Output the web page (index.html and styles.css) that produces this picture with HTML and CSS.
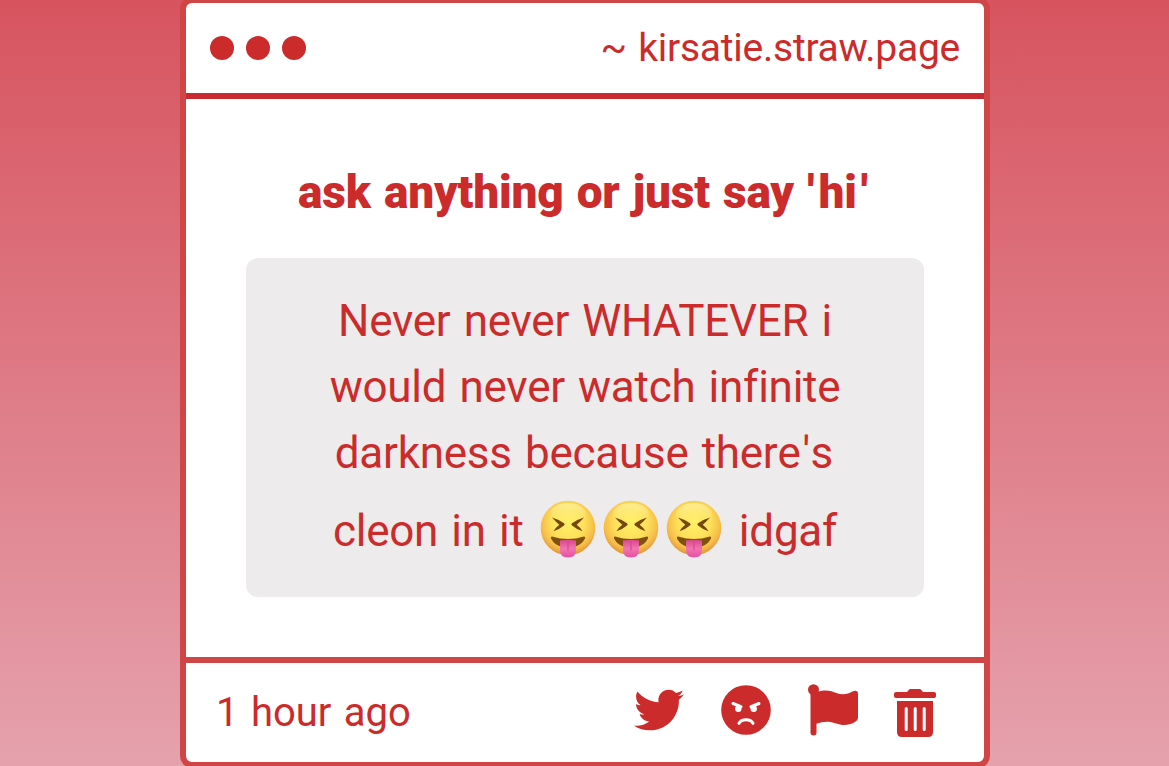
FILE: index.html
```html
<!DOCTYPE html>
<html lang="en">
<head>
  <meta charset="UTF-8" />
  <meta name="viewport" content="width=device-width, initial-scale=1.0" />
  <title>kirsatie.straw.page</title>
  <link rel="stylesheet" href="styles.css">
</head>
<body>
  <!-- Shared emoji drawing -->
  <svg class="defs" width="0" height="0" aria-hidden="true">
    <defs>
      <radialGradient id="face" cx="50%" cy="40%" r="61%">
        <stop offset="0" stop-color="#fff166" />
        <stop offset="0.5" stop-color="#fde05a" />
        <stop offset="0.8" stop-color="#f5bd48" />
        <stop offset="1" stop-color="#dd9235" />
      </radialGradient>
      <linearGradient id="shine" x1="0" y1="0" x2="0" y2="1">
        <stop offset="0" stop-color="#fffbd0" stop-opacity="0.5" />
        <stop offset="1" stop-color="#fff27a" stop-opacity="0" />
      </linearGradient>
      <linearGradient id="tongue" x1="0" y1="0" x2="0" y2="1">
        <stop offset="0" stop-color="#d9478c" />
        <stop offset="0.5" stop-color="#f274b2" />
        <stop offset="1" stop-color="#e54f9f" />
      </linearGradient>
      <symbol id="squint" viewBox="0 0 56 58">
        <circle cx="28" cy="28" r="27.3" fill="url(#face)" />
        <ellipse cx="28" cy="14" rx="18" ry="11" fill="url(#shine)" />
        <path d="M12 17.500Q19 19.500 24 23.300Q25.400 24.400 24 25.500Q19 29.700 13.500 31.300Q15.500 27.500 19.300 24.700Q16 22 12 17.500Z" fill="#75480f" />
        <path d="M44 17.500Q37 19.500 32 23.300Q30.600 24.400 32 25.500Q37 29.700 42.500 31.300Q40.500 27.500 36.700 24.700Q40 22 44 17.500Z" fill="#75480f" />
        <path d="M12 36.500Q28 41.500 44 36.500Q45.500 36.500 45 38.500C42 44.500 36 47.500 28 47.500C20 47.500 14 44.500 11 38.500Q10.500 36.500 12 36.500Z" fill="#80500f" />
        <path d="M20 40.500Q28 39 36 40.500V50Q36 57.500 28 57.500Q20 57.500 20 50Z" fill="url(#tongue)" />
        <path d="M28 41.500V50" stroke="#d04a8e" stroke-width="1.200" stroke-linecap="round" />
      </symbol>
    </defs>
  </svg>

  <div class="card">
    <div class="card-header">
      <div class="dots">
        <span></span>
        <span></span>
        <span></span>
      </div>
      <div class="site">~ kirsatie.straw.page</div>
    </div>

    <div class="card-body">
      <h1>ask anything or just say <span class="quote">'</span>h<span class="quote">i'</span></h1>
      <div class="message">
        <p>Never never WHATEVER i</p>
        <p>would never watch infinite</p>
        <p>darkness because ther<span class="quote">e's</span></p>
        <p class="with-emoji">cleon in it <svg class="emoji"><use href="#squint" /></svg><svg class="emoji"><use href="#squint" /></svg><svg class="emoji"><use href="#squint" /></svg> idgaf</p>
      </div>
    </div>

    <div class="card-footer">
      <div class="time">1 hour ago</div>
      <div class="actions">
        <!-- Twitter -->
        <svg class="twitter" width="50" height="50" viewBox="0 0 512 512"><path d="M459.370 151.716c.325 4.548.325 9.097.325 13.645 0 138.720-105.583 298.558-298.558 298.558-59.452 0-114.680-17.219-161.137-47.106 8.447.974 16.568 1.299 25.340 1.299 49.055 0 94.213-16.568 130.274-44.832-46.132-.975-84.792-31.188-98.112-72.772 6.498.974 12.995 1.624 19.818 1.624 9.421 0 18.843-1.300 27.614-3.573-48.081-9.747-84.143-51.980-84.143-102.985v-1.299c13.969 7.797 30.214 12.670 47.431 13.319-28.264-18.843-46.781-51.005-46.781-87.391 0-19.492 5.197-37.360 14.294-52.954 51.655 63.675 129.300 105.258 216.365 109.807-1.624-7.797-2.599-15.918-2.599-24.040 0-57.828 46.782-104.934 104.934-104.934 30.213 0 57.502 12.670 76.670 33.137 23.715-4.548 46.456-13.320 66.599-25.340-7.798 24.366-24.366 44.833-46.132 57.827 21.117-2.273 41.584-8.122 60.426-16.243-14.292 20.791-32.161 39.308-52.628 54.253z" /></svg>
        <!-- Angry face -->
        <svg class="angry" width="50" height="50" viewBox="0 0 50 50">
          <circle cx="25" cy="25" r="24.800" />
          <path class="line" d="M12 18.500L20 21.700M38 18.500L30 21.700M18 38.300C20.500 33.500 29.500 33.500 32 38.300" />
          <circle class="hole" cx="17.300" cy="23.700" r="3.200" />
          <circle class="hole" cx="32.700" cy="23.700" r="3.200" />
        </svg>
        <!-- Flag -->
        <svg width="50" height="52" viewBox="0 0 50 52">
          <circle cx="5.500" cy="5.700" r="5.500" />
          <rect x="2.500" y="5" width="6" height="46.500" rx="3" />
          <path d="M8 8.500C17 5 23 7 29 9.300C35 11.500 40 10 45 7.300Q50 5.500 50 10V34Q50 36.500 47 38C40 42 34 41.500 28 39.500C21 37 16 37 8 39.800Z" />
        </svg>
        <!-- Trash -->
        <svg class="trash" width="42" height="49" viewBox="0 0 42 49">
          <path d="M2 3H13L14.500 1.200Q15.300 0 16.500 0H25.500Q26.700 0 27.500 1.200L29 3H40Q42 3 42 5V7Q42 9 40 9H2Q0 9 0 7V5Q0 3 2 3Z" />
          <path d="M3 12H39V43Q39 48 34 48H8Q3 48 3 43Z" />
          <path class="line" d="M12.200 19.500V40.500M21.200 19.500V40.500M30.200 19.500V40.500" />
        </svg>
      </div>
    </div>
  </div>
</body>
</html>
```

FILE: styles.css
```css
* {
  box-sizing: border-box;
}
body {
  margin: 0;
  height: 766px;
  overflow: hidden;
  background: linear-gradient(#d7545f, #e5a2ad);
  font-family: Roboto, Arial, sans-serif;
  color: #cc2b2b;
}
.defs {
  display: block;
}
.card {
  display: flex;
  flex-direction: column;
  width: 810px;
  height: 771px;
  margin: -3px 0 0 180px;
  background: white;
  border: 6px solid #d04545;
  border-radius: 12px;
}
.card-header {
  display: flex;
  justify-content: space-between;
  align-items: center;
  height: 96px;
  padding: 0 24px;
  border-bottom: 6px solid #c82b30;
}
.dots {
  display: flex;
  gap: 12px;
}
.dots span {
  width: 24px;
  height: 24px;
  border-radius: 50%;
  background: #cc2b2b;
}
.site {
  font-size: 39px;
  letter-spacing: -0.25px;
  word-spacing: 2px;
  white-space: nowrap;
}
.card-body {
  flex: 1;
  padding: 60px;
  text-align: center;
}
h1 {
  margin: 0 0 33px;
  font-size: 46px;
  font-weight: 900;
  line-height: 66px;
  letter-spacing: -0.2px;
  word-spacing: 2px;
  white-space: nowrap;
}
.message {
  height: 339px;
  padding: 30px 0;
  background: #edebec;
  border-radius: 12px;
  font-size: 44px;
  letter-spacing: -0.25px;
  word-spacing: 2.5px;
}
.message p {
  margin: 0;
  line-height: 66px;
  white-space: nowrap;
}
.message .with-emoji {
  line-height: 90px;
}
/* A bit of air around the straight quotes */
.quote {
  letter-spacing: 4px;
}
.message .quote {
  letter-spacing: 2px;
}
.emoji {
  width: 56px;
  height: 58px;
  margin: 0 3.5px;
  vertical-align: -12px;
}
.card-footer {
  display: flex;
  justify-content: space-between;
  align-items: center;
  height: 105px;
  padding: 0 48px 0 30px;
  border-top: 6px solid #d04545;
}
.time {
  font-size: 40px;
  word-spacing: 2.5px;
}
.actions {
  display: flex;
  align-items: flex-start;
  gap: 36px;
  margin-bottom: 3px;
  fill: #cc2b2b;
}
.twitter {
  margin: 1px 1px 0 0;
}
.angry {
  margin: 1px 1px 0 0;
}
.trash {
  margin-top: 5px;
}
.line {
  fill: none;
  stroke: white;
  stroke-width: 3;
  stroke-linecap: round;
}
.hole {
  fill: white;
}
```
